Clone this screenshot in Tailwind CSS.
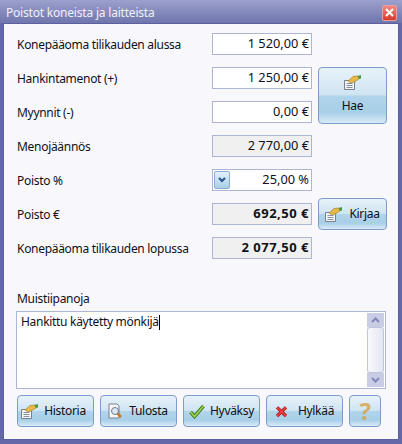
<!DOCTYPE html>
<html lang="fi">
<head>
  <meta charset="UTF-8" />
  <title>Poistot koneista ja laitteista</title>
  <script src="https://cdn.jsdelivr.net/npm/@tailwindcss/browser@4"></script>
</head>
<body class="m-0">
  <svg class="hidden">
    <symbol id="hand" viewBox="0 0 17 15">
      <path d="M.5 5.500h10v9H.5z" fill="#f4f4f4" stroke="#77808c"/>
      <path d="M2.500 8.500h6M2.500 10.500h6M2.500 12.500h6" stroke="#8a94a8"/>
      <path d="M4 6l5-4.500 5-.5 1 3-4 2.500-4 1.500z" fill="#e8b848" stroke="#a07820" stroke-width=".6"/>
      <path d="M13.500 1L17 0v3.500L15 4z" fill="#4a9a3a"/>
    </symbol>
  </svg>
  <div class="w-[402px] h-[444px] flex flex-col bg-[#6468a8] font-['Noto_Sans',sans-serif] text-[12px] tracking-[-0.3px] text-[#101018] overflow-hidden">
    <!-- title bar -->
    <div class="h-[23px] shrink-0 flex items-center justify-between pl-[6px] pr-[5px] pt-[2px] bg-gradient-to-b from-[#9ca0cc] to-[#7076ac] text-[#f0f0f8]">
      <span class="tracking-[-0.2px]">Poistot koneista ja laitteista</span>
      <div class="w-[15px] h-[16px] rounded-[2px] border border-[#e8a0a0] bg-gradient-to-b from-[#f08880] to-[#d83828] flex items-center justify-center">
        <svg width="9" height="9" viewBox="0 0 9 9"><path d="M1 1l7 7M8 1l-7 7" stroke="#fff" stroke-width="2"/></svg>
      </div>
    </div>

    <div class="flex-1 mx-[3px] mb-[4px] bg-[#f8f8fc] pl-[13px] pr-[11px] pt-[9px] flex flex-col border border-[#5c60a0]">
      <!-- form rows -->
      <div class="grid grid-cols-[189px_100px_69px] gap-x-[6px] gap-y-[12px] auto-rows-[22px] items-center">
        <label class="pt-[1px]">Konepääoma tilikauden alussa</label>
        <div class="h-[22px] border border-[#b0b4d4] bg-white flex items-center justify-end pr-[2px] text-[12.800px] tracking-normal">1 520,00 €</div>
        <div></div>

        <label class="pt-[1px]">Hankintamenot (+)</label>
        <div class="h-[22px] border border-[#b0b4d4] bg-white flex items-center justify-end pr-[2px] text-[12.800px] tracking-normal">1 250,00 €</div>
        <button class="row-span-2 h-[57px] rounded-[4px] border border-[#7f9cc8] bg-[linear-gradient(#e8f2fa,#cfe4f2_48%,#b0d4ea_52%,#a8cfe8_80%,#d8eaf6)] flex flex-col items-center justify-center gap-[7px]">
          <svg width="17" height="15"><use href="#hand"/></svg>
          <span>Hae</span>
        </button>

        <label class="pt-[1px]">Myynnit (-)</label>
        <div class="h-[22px] border border-[#b0b4d4] bg-white flex items-center justify-end pr-[2px] text-[12.800px] tracking-normal">0,00 €</div>

        <label class="pt-[1px]">Menojäännös</label>
        <div class="h-[22px] border border-[#b0b4d4] bg-[#f0f0f0] flex items-center justify-end pr-[2px] text-[12.800px] tracking-normal">2 770,00 €</div>
        <div></div>

        <label class="pt-[1px]">Poisto %</label>
        <div class="h-[22px] border border-[#b0b4d4] bg-white flex items-center justify-between pl-[1px] pr-[2px] text-[12.800px] tracking-normal">
          <div class="w-[16px] h-[18px] rounded-[2px] border border-[#8aaed0] bg-gradient-to-b from-[#e4f0fa] to-[#a8cfe8] flex items-center justify-center">
            <svg width="8" height="6" viewBox="0 0 8 6"><path d="M1 1l3 3 3-3" fill="none" stroke="#24548c" stroke-width="2"/></svg>
          </div>
          <span>25,00 %</span>
        </div>
        <div></div>

        <label class="pt-[1px]">Poisto €</label>
        <div class="h-[22px] border border-[#b0b4d4] bg-[#f0f0f0] flex items-center justify-end pr-[2px] font-bold text-[13px] tracking-[0.5px]">692,50 €</div>
        <button class="h-[32px] rounded-[4px] border border-[#7f9cc8] bg-[linear-gradient(#e8f2fa,#cfe4f2_48%,#b0d4ea_52%,#a8cfe8_80%,#d8eaf6)] flex items-center justify-center gap-[7px]">
          <svg width="17" height="15"><use href="#hand"/></svg>
          <span>Kirjaa</span>
        </button>

        <label class="pt-[1px]">Konepääoma tilikauden lopussa</label>
        <div class="h-[22px] border border-[#b0b4d4] bg-[#f0f0f0] flex items-center justify-end pr-[2px] font-bold text-[13px] tracking-[0.5px]">2 077,50 €</div>
        <div></div>
      </div>

      <!-- notes -->
      <div class="mt-[32px] mb-[4px] leading-[16px]">Muistiipanoja</div>
      <div class="-ml-px h-[78px] w-[370px] border border-[#b0b4d4] bg-white flex justify-between">
        <div class="pl-[4px] pt-[1px] flex items-start leading-[18px]">
          <span>Hankittu käytetty mönkijä</span><span class="w-px h-[15px] bg-black mt-[2px]"></span>
        </div>
        <!-- scrollbar -->
        <div class="w-[17px] mr-px my-px flex flex-col bg-[#eef0f8]">
          <div class="h-[14px] bg-[#c8cce4] flex items-center justify-center">
            <svg width="9" height="6" viewBox="0 0 9 6"><path d="M1 5l3.500-3.500L8 5" fill="none" stroke="#8088b8" stroke-width="2"/></svg>
          </div>
          <div class="flex-1 rounded-[3px] border border-[#c0c4dc] bg-gradient-to-r from-[#f8f8fc] to-[#e4e6f2]"></div>
          <div class="h-[14px] bg-[#c8cce4] flex items-center justify-center">
            <svg width="9" height="6" viewBox="0 0 9 6"><path d="M1 1l3.500 3.500L8 1" fill="none" stroke="#8088b8" stroke-width="2"/></svg>
          </div>
        </div>
      </div>

      <!-- bottom buttons -->
      <div class="mt-[6px] flex gap-[6px]">
        <button class="w-[77px] h-[32px] pr-[4px] rounded-[4px] border border-[#7f9cc8] bg-[linear-gradient(#e8f2fa,#cfe4f2_48%,#b0d4ea_52%,#a8cfe8_80%,#d8eaf6)] flex items-center justify-center gap-[6px]">
          <svg width="17" height="15"><use href="#hand"/></svg><span>Historia</span>
        </button>
        <button class="w-[77px] h-[32px] pr-[2px] rounded-[4px] border border-[#7f9cc8] bg-[linear-gradient(#e8f2fa,#cfe4f2_48%,#b0d4ea_52%,#a8cfe8_80%,#d8eaf6)] flex items-center justify-center gap-[6px]">
          <svg width="16" height="16" viewBox="0 0 16 16"><path d="M2 1h8l2 2v12H2z" fill="#f8f8f8" stroke="#77808c"/><circle cx="8" cy="8" r="3.500" fill="#dce8f4" stroke="#707a88"/><path d="M10.500 10.500l3.500 3.500" stroke="#c87820" stroke-width="2.500"/></svg><span>Tulosta</span>
        </button>
        <button class="w-[77px] h-[32px] rounded-[4px] border border-[#7f9cc8] bg-[linear-gradient(#e8f2fa,#cfe4f2_48%,#b0d4ea_52%,#a8cfe8_80%,#d8eaf6)] flex items-center justify-center gap-[5px]">
          <svg width="16" height="16" viewBox="0 0 16 16"><path d="M1.500 9l4 4.500L14.500 3" fill="none" stroke="#3f7a20" stroke-width="3.500"/><path d="M1.500 9l4 4.500L14.500 3" fill="none" stroke="#a4d850" stroke-width="1.500"/></svg><span>Hyväksy</span>
        </button>
        <button class="w-[77px] h-[32px] rounded-[4px] border border-[#7f9cc8] bg-[linear-gradient(#e8f2fa,#cfe4f2_48%,#b0d4ea_52%,#a8cfe8_80%,#d8eaf6)] flex items-center justify-center gap-[10px]">
          <svg width="13" height="13" viewBox="0 0 16 16"><path d="M2.500 3l11 10.500M13.500 3l-11 10.500" fill="none" stroke="#a81818" stroke-width="4"/><path d="M2.500 3l11 10.500M13.500 3l-11 10.500" fill="none" stroke="#f04040" stroke-width="2"/></svg><span>Hylkää</span>
        </button>
        <button class="w-[32px] h-[32px] rounded-[4px] border border-[#7f9cc8] bg-[linear-gradient(#e8f2fa,#cfe4f2_48%,#b0d4ea_52%,#a8cfe8_80%,#d8eaf6)] flex items-center justify-center text-[24px] font-bold text-[#d8a040]/80">?</button>
      </div>
    </div>
  </div>
</body>
</html>
